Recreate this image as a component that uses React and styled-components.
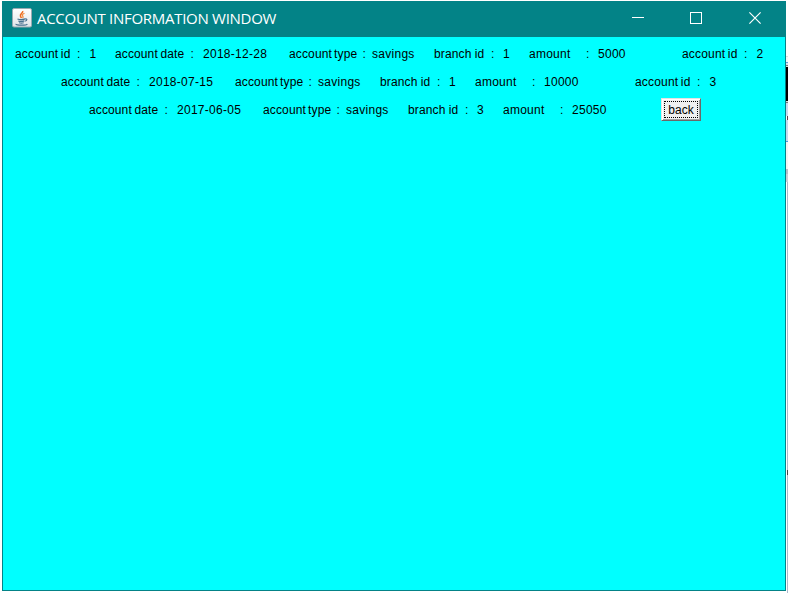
import React from "react";
import styled, { createGlobalStyle } from "styled-components";

const GlobalStyle = createGlobalStyle`
  * { box-sizing: border-box; }
  body { margin: 0; background: #fff; overflow: hidden; }
`;

const Desktop = styled.div`
  width: 788px;
  height: 593px;
  display: flex;
  padding: 1px 0 2px 2px;
  background: #fff;
`;

const Window = styled.main`
  width: 784px;
  height: 590px;
  flex: none;
  display: flex;
  flex-direction: column;
  background: #00ffff;
  border: 1px solid #038387;
  border-top: 0;
`;

const TitleBar = styled.header`
  height: 36px;
  flex: none;
  display: flex;
  align-items: center;
  margin: 0 -1px;
  padding: 0 1px 2px 10px;
  background: #038387;
  color: #fff;
`;

const Title = styled.h1`
  flex: 1;
  margin: 0 0 0 5px;
  font: 400 15px/20px "Open Sans", "Noto Sans", sans-serif;
  letter-spacing: ${(p) => p.$spacing}px;
  white-space: nowrap;
`;

const Controls = styled.div`
  display: flex;
  align-self: stretch;
`;

const Control = styled.button`
  width: 58px;
  padding: 0;
  border: 0;
  background: transparent;
  color: #fff;
  display: flex;
  align-items: center;
  justify-content: center;
  &:last-child { width: 60px; }
`;

const Content = styled.section`
  display: flex;
  flex-direction: column;
  padding-top: 3px;
`;

const Row = styled.div`
  height: 28px;
  display: flex;
  align-items: center;
  padding-left: ${(p) => p.$indent}px;
  font: 12px/16px "Liberation Sans", Arial, sans-serif;
  color: #000;
`;

const Field = styled.div`
  flex: none;
  display: grid;
  grid-template-columns: ${(p) => p.$columns};
  white-space: pre;
`;

const Label = styled.span`
  letter-spacing: ${(p) => p.$spacing}px;
  word-spacing: ${(p) => p.$gap}px;
`;

const Value = styled.span`
  letter-spacing: ${(p) => p.$spacing}px;
`;

const BackButton = styled.button`
  width: 40px;
  height: 23px;
  margin-bottom: 1px;
  padding: 2px;
  background: #f0f0f0;
  border: 1px solid;
  border-color: #e3e3e3 #696969 #696969 #e3e3e3;
  box-shadow: inset 1px 1px #fff, inset -1px -1px #a0a0a0;
  font: 12px/16px "Liberation Sans", Arial, sans-serif;
  letter-spacing: 0.1px;
  color: #000;
`;

const FocusRing = styled.span`
  display: block;
  height: 17px;
  border: 1px dotted #000;
  line-height: 16px;
`;

const Backdrop = styled.aside`
  width: 2px;
  display: flex;
  flex-direction: column;
`;

const Strip = styled.div`
  flex: none;
  height: ${(p) => p.$h}px;
  background: ${(p) => p.$color};
  margin-left: ${(p) => p.$inset || 0}px;
`;

const kinds = {
  id: { label: "account id", labelWidth: 62, colon: 12.6, value: 25.4, spacing: 0.18, gap: -1 },
  date: { label: "account date", labelWidth: 75.5, colon: 12.5, value: 86, spacing: 0.12, gap: -0.8 },
  type: { label: "account type", labelWidth: 73.5, colon: 9.5, value: 62, spacing: 0.14, gap: -1.4 },
  branch: { label: "branch id", labelWidth: 57, colon: 12, value: 26, spacing: 0.15, gap: -0.3 },
  amount: { label: "amount", labelWidth: 57, colon: 12, value: 84, spacing: 0.25, gap: 0 },
};

const rows = [
  { indent: 12, fields: [["id", "1"], ["date", "2018-12-28"], ["type", "savings"], ["branch", "1"], ["amount", "5000", 84], ["id", "2"]] },
  { indent: 58, fields: [["date", "2018-07-15"], ["type", "savings"], ["branch", "1"], ["amount", "10000", 91], ["id", "3"]] },
  { indent: 86, back: true, fields: [["date", "2017-06-05"], ["type", "savings"], ["branch", "3"], ["amount", "25050", 89]] },
];

const strips = [
  [55, "#ffffff"], [1, "#dddddd"], [5, "#f4f8fb"], [1, "#5f9fd8"], [2, "#d5e2ef"], [1, "#777777"], [1, "#dddddd"],
  [34, "#000000"], [1, "#dddddd"], [1, "#777777"], [13, "#c5d9ef"], [4, "#5c4250", 1], [21, "#c5d9ef"], [1, "#4a9ae0"],
  [27, "#f4f4f4"], [5, "#b7bdc9"], [8, "#c9ced8"], [288, "#adb8cc", 1], [5, "#444444", 1], [119, "#adb8cc", 1],
];

function AccountField({ kind, value, valueWidth }) {
  const k = kinds[kind];
  return (
    <Field $columns={`${k.labelWidth}px ${k.colon}px ${valueWidth || k.value}px`}>
      <Label $spacing={k.spacing} $gap={k.gap}>{k.label}</Label>
      <span>:</span>
      <Value $spacing={0.28}>{value}</Value>
    </Field>
  );
}

function JavaIcon() {
  return (
    <svg width="20" height="20" viewBox="0 0 20 20" fill="none">
      <defs>
        <linearGradient id="tile" x1="0" y1="0" x2="0" y2="1">
          <stop stopColor="#fff" />
          <stop offset="1" stopColor="#dfe4e8" />
        </linearGradient>
      </defs>
      <rect x=".5" y=".5" width="19" height="18.5" rx="1.5" fill="url(#tile)" stroke="#9aaab2" />
      <path d="M10.7 3C11.5 5 7.3 6 8.5 8.3L9.5 10" stroke="#ed6b20" strokeWidth="1.5" />
      <path d="M12.5 5.3C9.5 6.6 10 7.3 11 8.5c.5.7-.1 1.1-.5 1.5" stroke="#f28a3c" strokeWidth="1.2" />
      <path d="M5.5 11c2 .8 5.6.7 7.5-.1M6.3 13c1.8.6 4.4.5 6.1-.1M7 14.7c1.5.5 3.5.4 4.7 0M13 11c2.5-.7 2.4 1.6.2 2.2M4 15.8c-.5 1.8 10.5 1.8 11.3.1" stroke="#47718f" strokeWidth="1.2" />
    </svg>
  );
}

export default function App() {
  return (
    <Desktop>
      <GlobalStyle />
      <Window>
        <TitleBar>
          <JavaIcon />
          <Title $spacing={-0.29}>ACCOUNT INFORMATION WINDOW</Title>
          <Controls>
            <Control aria-label="Minimize">
              <svg width="12" height="12" shapeRendering="crispEdges"><path d="M0 5.5h12" stroke="currentColor" /></svg>
            </Control>
            <Control aria-label="Maximize">
              <svg width="12" height="12" shapeRendering="crispEdges"><path d="M.5.5h11v11H.5z" fill="none" stroke="currentColor" /></svg>
            </Control>
            <Control aria-label="Close">
              <svg width="12" height="12"><path d="M.4.4l11.2 11.2M11.6.4L.4 11.6" stroke="currentColor" strokeWidth="1.15" /></svg>
            </Control>
          </Controls>
        </TitleBar>
        <Content>
          {rows.map((row, i) => (
            <Row key={i} $indent={row.indent}>
              {row.fields.map(([kind, value, width], j) => (
                <AccountField key={j} kind={kind} value={value} valueWidth={width} />
              ))}
              {row.back && <BackButton><FocusRing>back</FocusRing></BackButton>}
            </Row>
          ))}
        </Content>
      </Window>
      <Backdrop>
        {strips.map(([h, color, inset], i) => <Strip key={i} $h={h} $color={color} $inset={inset} />)}
      </Backdrop>
    </Desktop>
  );
}
